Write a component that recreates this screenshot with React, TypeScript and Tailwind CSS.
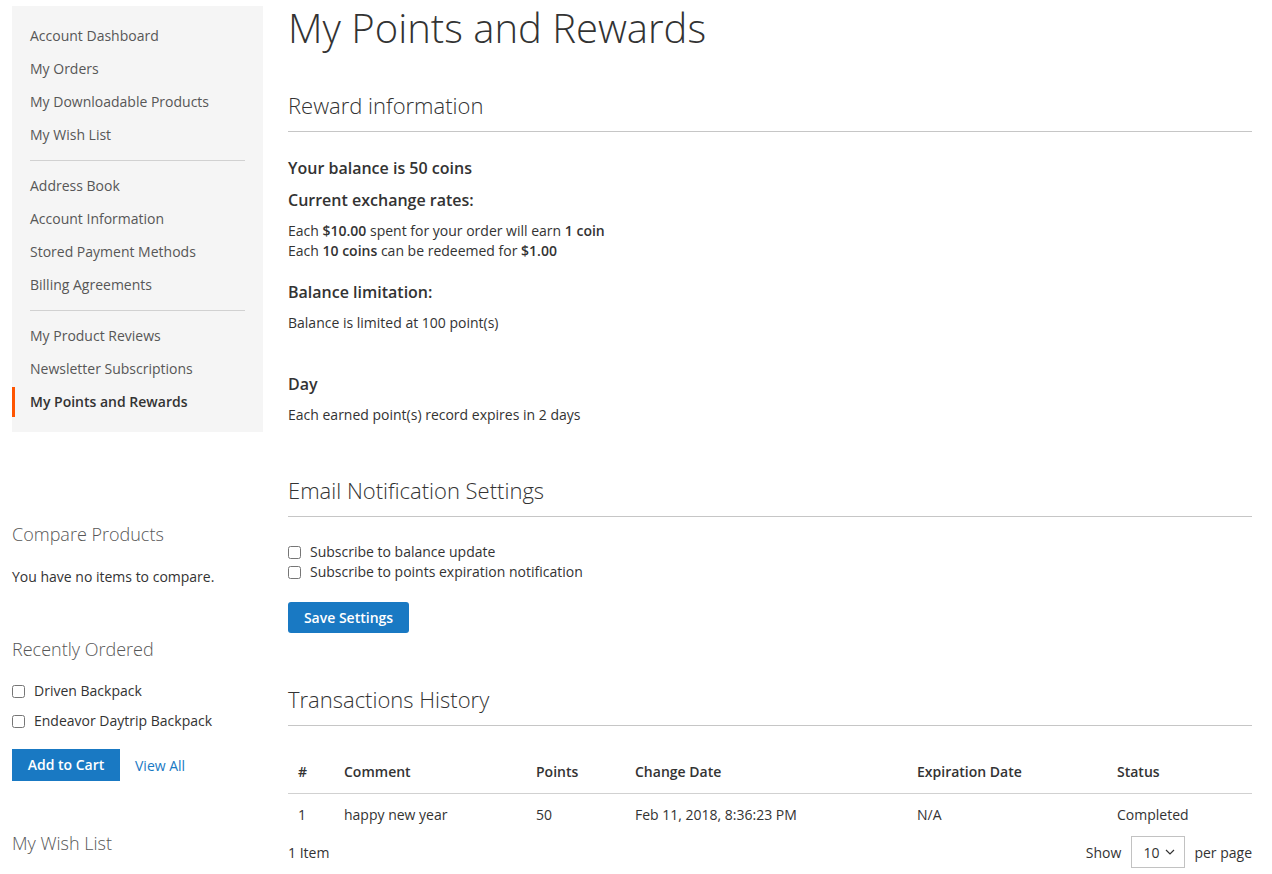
import React from "react";

const navGroups = [
  ["Account Dashboard", "My Orders", "My Downloadable Products", "My Wish List"],
  ["Address Book", "Account Information", "Stored Payment Methods", "Billing Agreements"],
  ["My Product Reviews", "Newsletter Subscriptions", "My Points and Rewards"],
];

const active = "My Points and Rewards";

function BlockTitle({ children, className = "" }: { children: React.ReactNode; className?: string }) {
  return (
    <h2 className={`border-b border-[#c6c6c6] pb-[12px] text-[22px] font-light leading-[28px] text-[#333] ${className}`}>
      {children}
    </h2>
  );
}

function Checkbox() {
  return <input type="checkbox" className="m-0 h-[13px] w-[13px] shrink-0 accent-[#1979c3]" />;
}

export default function App() {
  return (
    <div
      className="flex gap-[25px] bg-white pl-[12px] pr-[20px] pt-[6px] text-[14px] text-[#333]"
      style={{ fontFamily: '"Open Sans", "Noto Sans", sans-serif' }}
    >
      {/* sidebar */}
      <aside className="w-[251px] shrink-0">
        <nav className="bg-[#f5f5f5] py-[15px]">
          {navGroups.map((group, gi) => (
            <div key={gi}>
              {gi > 0 && <div className="mx-[18px] my-[10px] border-t border-[#d1d1d1]" />}
              <ul className="space-y-[3px]">
                {group.map((label) => (
                  <li
                    key={label}
                    className={`flex h-[30px] items-center border-l-[3px] pl-[15px] leading-[20px] ${
                      label === active
                        ? "border-[#ff5501] font-semibold text-[#333]"
                        : "border-transparent text-[#575757]"
                    }`}
                  >
                    {label}
                  </li>
                ))}
              </ul>
            </div>
          ))}
        </nav>

        <h3 className="mt-[90px] text-[18px] font-light leading-[24px] text-[#575757]">Compare Products</h3>
        <p className="mt-[21px] leading-[20px]">You have no items to compare.</p>

        <h3 className="mt-[50px] text-[18px] font-light leading-[24px] text-[#575757]">Recently Ordered</h3>
        <ul className="mt-[20px] space-y-[10px]">
          {["Driven Backpack", "Endeavor Daytrip Backpack"].map((p) => (
            <li key={p} className="flex items-center gap-[9px] leading-[20px]">
              <Checkbox />
              <span>{p}</span>
            </li>
          ))}
        </ul>
        <div className="mt-[18px] flex items-center gap-[15px]">
          <button className="h-[32px] w-[108px] bg-[#1979c3] text-[14px] font-semibold leading-[20px] text-white">
            Add to Cart
          </button>
          <a className="text-[#1979c3]">View All</a>
        </div>

        <h3 className="mt-[50px] text-[18px] font-light leading-[24px] text-[#575757]">My Wish List</h3>
      </aside>

      {/* main column */}
      <main className="min-w-0 flex-1">
        <h1 className="text-[40px] font-light leading-[44px] text-[#333]">My Points and Rewards</h1>

        <BlockTitle className="mt-[41px]">Reward information</BlockTitle>
        <div className="pt-[25px]">
          <p className="text-[16px] font-semibold leading-[22px]">Your balance is 50 coins</p>
          <p className="mt-[10px] text-[16px] font-semibold leading-[22px]">Current exchange rates:</p>
          <div className="mt-[10px] leading-[20px]">
            <p>
              Each <b className="font-semibold">$10.00</b> spent for your order will earn <b className="font-semibold">1 coin</b>
            </p>
            <p>
              Each <b className="font-semibold">10 coins</b> can be redeemed for <b className="font-semibold">$1.00</b>
            </p>
          </div>
          <p className="mt-[20px] text-[16px] font-semibold leading-[22px]">Balance limitation:</p>
          <p className="mt-[10px] leading-[20px]">Balance is limited at 100 point(s)</p>
          <p className="mt-[40px] text-[16px] font-semibold leading-[22px]">Day</p>
          <p className="mt-[10px] leading-[20px]">Each earned point(s) record expires in 2 days</p>
        </div>

        <BlockTitle className="mt-[51px]">Email Notification Settings</BlockTitle>
        <div className="mt-[25px] leading-[20px]">
          <label className="flex items-center gap-[9px]">
            <Checkbox />
            <span>Subscribe to balance update</span>
          </label>
          <label className="flex items-center gap-[9px]">
            <Checkbox />
            <span>Subscribe to points expiration notification</span>
          </label>
        </div>
        <button className="mt-[20px] h-[31px] w-[121px] rounded-[3px] bg-[#1979c3] text-[14px] font-semibold text-white">
          Save Settings
        </button>

        <BlockTitle className="mt-[52px]">Transactions History</BlockTitle>
        <table className="mt-[25px] w-full table-fixed border-collapse text-left leading-[20px]">
          <colgroup>
            <col className="w-[46px]" />
            <col className="w-[192px]" />
            <col className="w-[99px]" />
            <col className="w-[282px]" />
            <col className="w-[200px]" />
            <col />
          </colgroup>
          <thead>
            <tr className="border-b border-[#d1d1d1]">
              {["#", "Comment", "Points", "Change Date", "Expiration Date", "Status"].map((h) => (
                <th key={h} className="px-[10px] py-[11px] font-semibold">
                  {h}
                </th>
              ))}
            </tr>
          </thead>
          <tbody>
            <tr>
              {["1", "happy new year", "50", "Feb 11, 2018, 8:36:23 PM", "N/A", "Completed"].map((c, i) => (
                <td key={i} className="px-[10px] py-[11px]">
                  {c}
                </td>
              ))}
            </tr>
          </tbody>
        </table>
        <div className="flex h-[32px] items-center justify-between">
          <span>1 Item</span>
          <div className="flex items-center">
            <span>Show</span>
            <div className="ml-[10px] mr-[9px] flex h-[32px] w-[54px] items-center border border-[#c2c2c2] pl-[11px]">
              <span>10</span>
              <svg viewBox="0 0 10 6" className="ml-[6px] h-[6px] w-[10px]" fill="none" stroke="#333" strokeWidth="1.2">
                <polyline points="1,1 5,5 9,1" />
              </svg>
            </div>
            <span>per page</span>
          </div>
        </div>
      </main>
    </div>
  );
}
